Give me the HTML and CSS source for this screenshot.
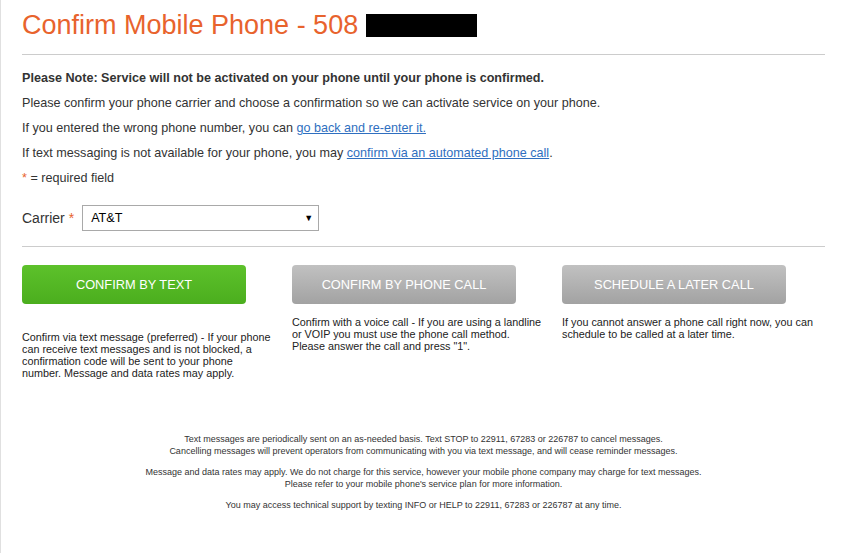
FILE: index.html
```html
<!DOCTYPE html>
<html>
<head>
<meta charset="utf-8">
<link rel="stylesheet" href="styles.css">
</head>
<body>
<div class="page">
  <h1 class="title">Confirm Mobile Phone - 508 <span class="redact"></span></h1>
  <hr class="rule">
  <p class="line bold">Please Note: Service will not be activated on your phone until your phone is confirmed.</p>
  <p class="line">Please confirm your phone carrier and choose a confirmation so we can activate service on your phone.</p>
  <p class="line">If you entered the wrong phone number, you can <a href="#">go back and re-enter it.</a></p>
  <p class="line">If text messaging is not available for your phone, you may <a href="#">confirm via an automated phone call</a>.</p>
  <p class="line"><span class="req">*</span> = required field</p>
  <div class="carrier">
    <label class="carrier-label">Carrier <span class="req">*</span></label>
    <div class="select"><span>AT&amp;T</span><span class="arrow">&#9660;</span></div>
  </div>
  <hr class="rule rule2">
  <div class="options">
    <div class="option first">
      <div class="btn green">CONFIRM BY TEXT</div>
      <p class="desc">Confirm via text message (preferred) - If your phone can receive text messages and is not blocked, a confirmation code will be sent to your phone number. Message and data rates may apply.</p>
    </div>
    <div class="option">
      <div class="btn gray">CONFIRM BY PHONE CALL</div>
      <p class="desc">Confirm with a voice call - If you are using a landline or VOIP you must use the phone call method. Please answer the call and press "1".</p>
    </div>
    <div class="option last">
      <div class="btn gray">SCHEDULE A LATER CALL</div>
      <p class="desc">If you cannot answer a phone call right now, you can schedule to be called at a later time.</p>
    </div>
  </div>
  <div class="footer">
    <p>Text messages are periodically sent on an as-needed basis. Text STOP to 22911, 67283 or 226787 to cancel messages.<br>Cancelling messages will prevent operators from communicating with you via text message, and will cease reminder messages.</p>
    <p>Message and data rates may apply. We do not charge for this service, however your mobile phone company may charge for text messages.<br>Please refer to your mobile phone's service plan for more information.</p>
    <p>You may access technical support by texting INFO or HELP to 22911, 67283 or 226787 at any time.</p>
  </div>
</div>
</body>
</html>
```
FILE: styles.css
```css
html, body {
  margin: 0;
  padding: 0;
  background: #fff;
}
body {
  font-family: "Liberation Sans", Arial, sans-serif;
  color: #333;
  border-left: 1px solid #e0e0e0;
  min-height: 553px;
  box-sizing: border-box;
}
.page {
  width: 803px;
  padding: 0 0 0 21px;
}
.title {
  margin: 0;
  padding-top: 10px;
  font-size: 27px;
  font-weight: normal;
  color: #e8632d;
  line-height: 30px;
  height: 30px;
}
.redact {
  display: inline-block;
  width: 111px;
  height: 23px;
  background: #000;
  vertical-align: -3px;
  margin-left: 0;
}
.rule {
  border: 0;
  border-top: 1px solid #ccc;
  margin: 14px 0 0 0;
  height: 0;
}
.line {
  margin: 0;
  font-size: 12.6px;
  line-height: 25px;
  height: 25px;
}
.line.bold {
  font-weight: bold;
  margin-top: 11px;
}
.line a {
  color: #2f6fc0;
  text-decoration: underline;
}
.req {
  color: #e8632d;
}
.carrier {
  display: flex;
  align-items: center;
  margin-top: 14px;
  gap: 8px;
}
.carrier-label {
  font-size: 14px;
  color: #333;
}
.select {
  width: 237px;
  height: 26px;
  box-sizing: border-box;
  border: 1px solid #a9a9a9;
  display: flex;
  align-items: center;
  justify-content: space-between;
  padding: 0 5px 0 8px;
  font-size: 12.6px;
  color: #000;
}
.arrow {
  font-size: 9px;
}
.rule2 {
  margin-top: 15px;
}
.options {
  display: flex;
  gap: 20px;
  margin-top: 18px;
}
.option {
  width: 250px;
  flex: none;
}
.option.last {
  width: auto;
  flex: 1;
}
.btn {
  width: 224px;
  height: 39px;
  border-radius: 4px;
  color: #fff;
  font-size: 12.8px;
  display: flex;
  align-items: center;
  justify-content: center;
}
.green {
  background: linear-gradient(#5dc12b, #4bae1e);
}
.gray {
  background: linear-gradient(#c1c1c1, #a2a2a2);
}
.desc {
  margin: 12px 0 0 0;
  font-size: 10.8px;
  line-height: 12px;
  color: #222;
}
.first .desc {
  margin-top: 27px;
}
.footer {
  margin-top: 54px;
  text-align: center;
  font-size: 9px;
  line-height: 12px;
  color: #333;
}
.footer p {
  margin: 0 0 9px 0;
}
```
